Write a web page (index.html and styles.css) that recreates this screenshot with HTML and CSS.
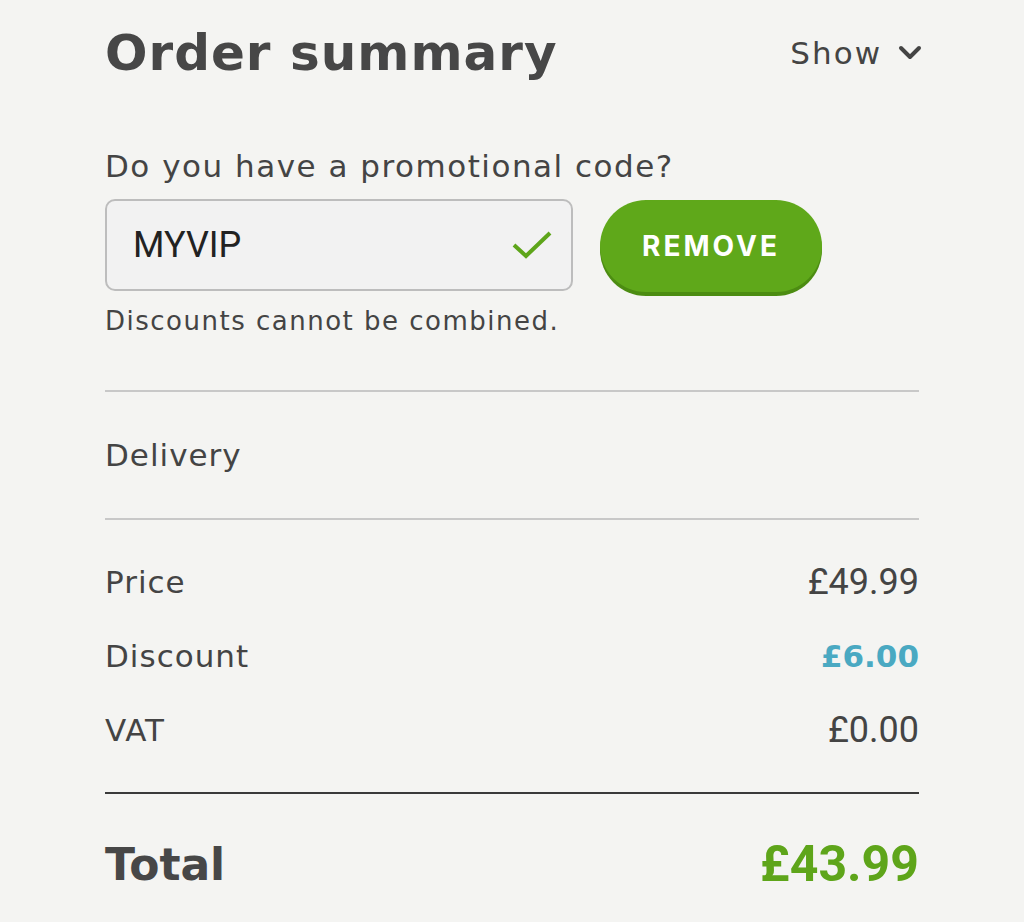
FILE: index.html
```html
<!DOCTYPE html>
<html lang="en">
<head>
    <meta charset="UTF-8">
    <meta name="viewport" content="width=device-width, initial-scale=1.0">
    <title>Order summary</title>
    <link rel="stylesheet" href="styles.css">
</head>
<body>
    <div class="summary">
        <div class="summary-head">
            <h1>Order summary</h1>
            <button class="toggle">Show
                <svg width="24" height="16" viewBox="0 0 24 16"><path d="M3 3 L12 12 L21 3" fill="none" stroke="#444" stroke-width="4" stroke-linecap="round" stroke-linejoin="round"/></svg>
            </button>
        </div>

        <div class="promo">
            <label class="promo-label" for="promo">Do you have a promotional code?</label>
            <div class="promo-row">
                <div class="promo-field">
                    <input id="promo" type="text" value="MYVIP">
                    <svg class="check" width="42" height="32" viewBox="0 0 42 32"><path d="M3 16 L15 27 L39 4" fill="none" stroke="#5ea51a" stroke-width="4"/></svg>
                </div>
                <button class="button">REMOVE</button>
            </div>
            <p class="promo-note">Discounts cannot be combined.</p>
        </div>

        <div class="delivery">Delivery</div>

        <div class="lines">
            <div class="line"><span>Price</span><span class="amount">£49.99</span></div>
            <div class="line"><span>Discount</span><span class="amount discount">£6.00</span></div>
            <div class="line"><span>VAT</span><span class="amount">£0.00</span></div>
        </div>

        <div class="total">
            <span>Total</span>
            <span class="total-amount">£43.99</span>
        </div>
    </div>
</body>
</html>
```

FILE: styles.css
```css
body {
    margin: 0;
    background: #f4f4f2;
    font-family: "DejaVu Sans", Inter, sans-serif;
    color: #444;
}
.summary {
    padding: 0 105px;
}
.summary-head {
    display: flex;
    justify-content: space-between;
    align-items: center;
    height: 106px;
}
.summary-head h1 {
    margin: 0;
    font-size: 50px;
    font-weight: 700;
    letter-spacing: 1px;
    color: #474747;
}
.toggle {
    display: flex;
    align-items: center;
    gap: 16px;
    background: none;
    border: none;
    padding: 0;
    margin-right: -3px;
    font-family: inherit;
    font-size: 31px;
    letter-spacing: 2px;
    color: #444;
}
.promo-label {
    display: block;
    margin-top: 42px;
    font-size: 31px;
    letter-spacing: 1.5px;
    line-height: 36px;
}
.promo-row {
    display: flex;
    align-items: center;
    gap: 27px;
    margin-top: 14px;
}
.promo-field {
    position: relative;
    width: 468px;
}
.promo-field input {
    box-sizing: border-box;
    width: 100%;
    height: 92px;
    padding: 0 26px;
    border: 2px solid #bdbdbd;
    border-radius: 10px;
    background: #f2f2f2;
    font-family: Roboto, sans-serif;
    font-size: 36px;
    color: #222;
}
.check {
    position: absolute;
    right: 20px;
    top: 30px;
}
.button {
    width: 222px;
    height: 92px;
    margin-top: 2px;
    border: none;
    border-radius: 46px;
    background: #5fa81a;
    box-shadow: 0 4px 0 #4c8c12;
    color: white;
    font-family: Inter, sans-serif;
    font-size: 28px;
    font-weight: 700;
    letter-spacing: 3px;
}
.promo-note {
    margin: 14px 0 0;
    font-size: 26px;
    letter-spacing: 1.5px;
    line-height: 30px;
}
.delivery {
    margin-top: 54px;
    border-top: 2px solid #c8c8c8;
    border-bottom: 2px solid #c8c8c8;
    height: 126px;
    line-height: 126px;
    font-size: 31px;
    letter-spacing: 1px;
}
.lines {
    padding: 25px 0 25px;
    border-bottom: 2px solid #3a3a3a;
}
.line {
    display: flex;
    justify-content: space-between;
    height: 74px;
    line-height: 74px;
    font-size: 31px;
    letter-spacing: 1px;
}
.amount {
    font-family: Roboto, sans-serif;
    font-size: 36px;
    letter-spacing: 0;
}
.discount {
    font-family: "DejaVu Sans", sans-serif;
    font-size: 31px;
    font-weight: 700;
    color: #4aa9c2;
}
.total {
    display: flex;
    justify-content: space-between;
    align-items: center;
    height: 140px;
    font-size: 44px;
    font-weight: 700;
    color: #474747;
}
.total-amount {
    font-family: Roboto, sans-serif;
    font-size: 50px;
    font-weight: 700;
    color: #5ea51a;
}
```
